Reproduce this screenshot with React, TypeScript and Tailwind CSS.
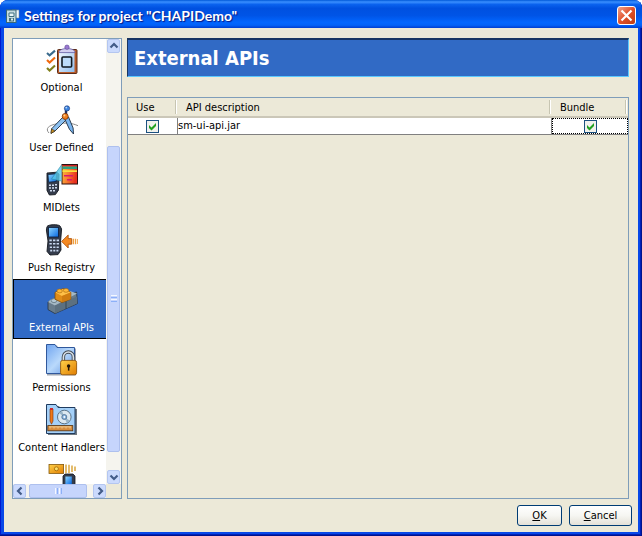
import React, { useState } from "react";
import type { ReactNode } from "react";

function Icon({ children }: { children: ReactNode }) {
  return (
    <svg viewBox="0 0 33 33" className="h-[33px] w-[33px]" aria-hidden="true">
      <defs>
        <linearGradient id="paper" x1="0" y1="0" x2="1" y2="1">
          <stop offset="0" stopColor="#f4faff" />
          <stop offset="1" stopColor="#8fbcec" />
        </linearGradient>
        <linearGradient id="folder" x1="0" y1="0" x2="1" y2="1">
          <stop offset="0" stopColor="#6fa4f0" />
          <stop offset="0.5" stopColor="#b9d9fb" />
          <stop offset="1" stopColor="#5a90e0" />
        </linearGradient>
        <linearGradient id="gold" x1="0" y1="0" x2="1" y2="1">
          <stop offset="0" stopColor="#ffd24a" />
          <stop offset="1" stopColor="#e07c00" />
        </linearGradient>
        <linearGradient id="screen" x1="0" y1="0" x2="1" y2="1">
          <stop offset="0" stopColor="#8fd8ff" />
          <stop offset="1" stopColor="#0868e0" />
        </linearGradient>
        <linearGradient id="heat" x1="0" y1="0" x2="1" y2="0.3">
          <stop offset="0" stopColor="#f8c840" />
          <stop offset="0.5" stopColor="#f88030" />
          <stop offset="1" stopColor="#e83020" />
        </linearGradient>
      </defs>
      {children}
    </svg>
  );
}

function OptionalIcon() {
  return (
    <Icon>
      <g fill="none" strokeWidth="2.1">
        <path d="M2 9l2.600 2.400L10 6.600" stroke="#3a6a8c" />
        <path d="M2 16l2.600 2.600L10 13.600" stroke="#f06a10" />
        <path d="M2 24l2.600 2.600L10 21.600" stroke="#80801c" />
      </g>
      <rect x="12.5" y="5.5" width="19.5" height="24" rx="1" fill="#b85a28" stroke="#5c2c18" />
      <path d="M14 7h15.500v21H14z" fill="url(#paper)" />
      <path d="M14 8.600c0-3 4-4 8-4s8 1 8 4z" fill="#d4d0f0" stroke="#6058a0" strokeWidth=".8" />
      <circle cx="22" cy="3.200" r="2.200" fill="#9a78d0" stroke="#5c4898" strokeWidth=".6" />
      <rect x="17" y="13" width="9.600" height="10" rx="1" fill="#bcdcfa" stroke="#101820" strokeWidth="1.600" />
    </Icon>
  );
}

function CompassIcon() {
  return (
    <Icon>
      <path d="M4 29c-4-4-1-8 9-9.300 8-1.200 14-.700 20 2" fill="none" stroke="#8c8c8c" strokeWidth="1" />
      <path d="M18.500 12.500l4 2L10 27l-4 2.400.600-4.600z" fill="#8cc0f0" stroke="#1c2c40" strokeWidth=".9" />
      <path d="M6.600 24.800L10 27l-4 2.400z" fill="#c89020" stroke="#302010" strokeWidth=".5" />
      <path d="M19.500 14.500l4-1.500 4.600 11 .400 6-4-4.600z" fill="#78b4f0" stroke="#1c2c40" strokeWidth=".9" />
      <path d="M21 6v6" stroke="#203060" strokeWidth="2.400" />
      <circle cx="22" cy="4.400" r="2.600" fill="#3d84e0" stroke="#1c3c7c" strokeWidth=".7" />
      <circle cx="21.300" cy="3.600" r=".9" fill="#b8dcff" />
      <circle cx="20.200" cy="12.400" r="3" fill="#f08020" stroke="#7c3000" strokeWidth=".8" />
      <circle cx="19.400" cy="11.500" r="1" fill="#ffd090" />
    </Icon>
  );
}

function MidletsIcon() {
  return (
    <Icon>
      <rect x="17" y="0.500" width="15.500" height="19.500" fill="url(#heat)" stroke="#301010" />
      <path d="M17.500 1h14.500v1.600H17.500z" fill="#d02020" />
      <path d="M17.500 2.600h14.500v2.400H17.500z" fill="#30a080" />
      <path d="M17.500 6.200h14.500v1.800H17.500z" fill="#f8e040" />
      <path d="M19 11h9v1.400h-9zM22 15h5v1.400h-5z" fill="#d81870" />
      <path d="M2 9l10-.800 2 2-.600 16-3 4.400-6 .400-2.400-4.600z" fill="#343c4c" stroke="#14181f" strokeWidth=".9" />
      <path d="M3 10.600l8.600-.800-.400 7.600-7.600.800z" fill="url(#screen)" stroke="#081838" strokeWidth=".7" />
      <path d="M6.500 15L16.500 1v16z" fill="#58c8e8" opacity=".8" />
      <path d="M6.500 15L16.500 1M6.500 15l10 2" fill="none" stroke="#2888a8" strokeWidth=".6" />
      <path
        d="M4 20.400h2v1.500H4zM7 20.400h2v1.500H7zM10 20h2v1.500h-2zM4 23.200h2v1.500H4zM7 23.200h2v1.500H7zM10 23h2v1.500h-2zM5 26h2v1.500H5zM8 26h2v1.500H8z"
        fill="#d0dcf0"
      />
    </Icon>
  );
}

function PushIcon() {
  return (
    <Icon>
      <path d="M2 2.600C3 .400 13 0 15 2l1.600 3-1 12 .400 9-3 4.600-8 .400-3-3.600L3 17 1.400 6z" fill="#343c4c" stroke="#14181f" strokeWidth=".9" />
      <rect x="3.600" y="3.400" width="9.800" height="9.600" fill="url(#screen)" stroke="#081838" strokeWidth=".8" />
      <path
        d="M4.400 15.400h2.400v1.800H4.400zM8 15.400h2.400v1.800H8zM11.600 15.400H14v1.800h-2.400zM4.400 19h2.400v1.600H4.400zM8 19h2.400v1.600H8zM11.600 19H14v1.600h-2.400zM4.800 22.400H7V24H4.800zM8.200 22.400h2.200V24H8.200zM11.600 22.400h2.200V24h-2.200zM5.200 25.800h2v1.600h-2zM8.300 25.800h2v1.600h-2zM11.400 25.800h2v1.600h-2z"
        fill="#c8d8f0"
      />
      <path d="M16.600 17.400l6.600-6.400v3.600h3.400v5.600h-3.400v3.800z" fill="#f48820" stroke="#a84c08" strokeWidth=".8" />
      <path d="M27.600 14.800h1.600v5.400h-1.600zM30 14.800h1.200v5.400H30zM32 15h.800v5H32z" fill="#f0a040" />
    </Icon>
  );
}

function BricksIcon() {
  return (
    <Icon>
      <path d="M3 18l7-4 21.600-6 .800 11.600L10 29.600l-7-4z" fill="#687c8c" stroke="#283440" strokeWidth=".8" />
      <path d="M3 18l7 3.600L32 9.400 25 7 5 16z" fill="#a4b8c4" />
      <path d="M10 21.600l22-9.200v7.200L10 29.400z" fill="#5c7080" />
      <path d="M21 17v8" stroke="#2c3c48" strokeWidth=".8" />
      <ellipse cx="9" cy="16.600" rx="2.800" ry="2" fill="#b4c8d4" stroke="#4c606c" strokeWidth=".6" />
      <path d="M10 8.400l8-3.800 7.800 3.800v6.800L17 18.600l-7-3.400z" fill="#e08c18" stroke="#844c08" strokeWidth=".8" />
      <path d="M10.400 8.600l7.600-3.600 7.600 3.600L17 12z" fill="#ffc048" />
      <path d="M17 12l8.600-3.400v6.600L17 18.200z" fill="#d07c10" />
      <ellipse cx="14.600" cy="7" rx="2.700" ry="1.900" fill="#ffb838" stroke="#a86408" strokeWidth=".6" />
      <ellipse cx="21" cy="6.400" rx="2.700" ry="1.900" fill="#ffb838" stroke="#a86408" strokeWidth=".6" />
    </Icon>
  );
}

function PermissionsIcon() {
  return (
    <Icon>
      <path d="M2 1.500h10l2 3h17v27H2z" fill="#a0a8b4" />
      <path d="M1.500.500H10l2 3h17.500v26h-28z" fill="url(#folder)" stroke="#30589c" />
      <path d="M18.400 17v-4a5 5 0 0110 0v4" fill="none" stroke="#404850" strokeWidth="3.400" />
      <path d="M18.400 17v-4a5 5 0 0110 0v4" fill="none" stroke="#d8e0e8" strokeWidth="1.600" />
      <rect x="15.600" y="16.400" width="16" height="14.400" rx="2" fill="url(#gold)" stroke="#94580c" strokeWidth=".9" />
      <circle cx="23.600" cy="22" r="1.700" fill="#241404" />
      <path d="M22.900 22h1.500v4.600h-1.500z" fill="#241404" />
    </Icon>
  );
}

function ContentIcon() {
  return (
    <Icon>
      <path d="M3 2h11l2 3h16v26H3z" fill="#707880" />
      <path d="M1.500.500H11l2 3h17v26H1.500z" fill="#a4d0f8" stroke="#203c60" />
      <path d="M5 5h3v12l-1.500 3.200L5 17z" fill="#f07818" stroke="#7c3008" strokeWidth=".6" />
      <path d="M5 4h3v2H5z" fill="#d02828" />
      <circle cx="19.300" cy="13" r="6.800" fill="#dce8f0" stroke="#50687c" strokeWidth=".9" />
      <path d="M19.300 13L14 9a6.600 6.600 0 013-2.300zM19.300 13l5.400 3.600a6.600 6.600 0 01-3 2.400z" fill="#98b4c8" />
      <circle cx="19.300" cy="13" r="2.500" fill="#88b4e0" stroke="#406080" strokeWidth=".7" />
      <circle cx="19.300" cy="13" r=".9" fill="#fff" />
      <rect x="2.800" y="21.600" width="25" height="5.200" fill="#d88c3c" stroke="#54300c" strokeWidth=".8" />
      <path d="M5 22v2.400M7 22v1.600M9 22v2.400M11 22v1.600M13 22v2.400M15 22v1.600M17 22v2.400M19 22v1.600M21 22v2.400M23 22v1.600M25 22v2.400" stroke="#fff0c0" strokeWidth=".8" />
    </Icon>
  );
}

function SignedIcon() {
  return (
    <Icon>
      <rect x="4" y=".4" width="14.600" height="9" fill="url(#gold)" stroke="#84580c" strokeWidth=".8" />
      <circle cx="11.400" cy="4.800" r="2" fill="#ffe068" stroke="#9c6408" strokeWidth=".8" />
      <path d="M21 .600v8.600M24 .800v8.200M27 1.600v6.400M30 2.600v4.400" stroke="#d8a030" strokeWidth="1.400" />
      <path d="M18 12l2-2h8l2 2v20H18z" fill="#343c4c" stroke="#14181f" strokeWidth=".8" />
      <path d="M20.400 12.500h6.400v7.500h-6.400z" fill="url(#screen)" />
    </Icon>
  );
}

const categories = [
  { name: "Optional", icon: <OptionalIcon /> },
  { name: "User Defined", icon: <CompassIcon /> },
  { name: "MIDlets", icon: <MidletsIcon /> },
  { name: "Push Registry", icon: <PushIcon /> },
  { name: "External APIs", icon: <BricksIcon /> },
  { name: "Permissions", icon: <PermissionsIcon /> },
  { name: "Content Handlers", icon: <ContentIcon /> },
  { name: "", icon: <SignedIcon /> },
];

const chevrons = {
  up: "M2.500 7.500L6 4l3.500 3.500",
  down: "M2.500 4.500L6 8l3.500-3.500",
  left: "M7.500 2.500L4 6l3.500 3.500",
  right: "M4.500 2.500L8 6 4.500 9.500",
};

function ScrollButton({ direction }: { direction: keyof typeof chevrons }) {
  return (
    <button
      type="button"
      aria-label={"Scroll " + direction}
      className="flex h-[14px] w-[13px] shrink-0 items-center justify-center rounded-xs border border-[#b4c6f0] bg-[#cbdafd]"
    >
      <svg viewBox="0 0 12 12" className="h-3 w-3 shrink-0" aria-hidden="true">
        <path d={chevrons[direction]} fill="none" stroke="#435c88" strokeWidth="2.200" />
      </svg>
    </button>
  );
}

function Check({ label }: { label: string }) {
  const [on, setOn] = useState(true);
  return (
    <span className="mx-auto grid h-[13px] w-[13px]">
      <input
        type="checkbox"
        aria-label={label}
        checked={on}
        onChange={(e) => setOn(e.target.checked)}
        className="col-start-1 row-start-1 h-[13px] w-[13px] appearance-none border border-[#1c5180] bg-[#f1f1ed]"
      />
      {on && (
        <svg viewBox="0 0 13 13" className="pointer-events-none col-start-1 row-start-1 h-[13px] w-[13px]" aria-hidden="true">
          <path d="M3 5l2.500 2.500L10 3v3l-4.500 4.500L3 8z" fill="#21a121" />
        </svg>
      )}
    </span>
  );
}

function HeaderCell({ children }: { children: ReactNode }) {
  return (
    <th scope="col" className="border-b-2 border-[#cbc7b8] p-0 text-left font-normal">
      <div className="flex h-[18px] items-center">
        <span className="flex-1 pt-[2px] pl-2 leading-4">{children}</span>
        <span className="mr-px h-[14px] w-[2px] border-r border-l border-r-white border-l-[#c7c5b2]" />
      </div>
    </th>
  );
}

const dialogButton =
  "h-[21px] rounded-[3px] border border-[#003c74] bg-linear-to-b from-white via-[#f6f6f2] to-[#e4e1d8] text-center leading-[18px]";

export default function App() {
  const [selected, setSelected] = useState("External APIs");
  return (
    <div className="flex h-screen flex-col overflow-hidden rounded-t-lg bg-[#0848e8] font-['DejaVu_Sans_Condensed','Liberation_Sans',sans-serif] text-[11px] text-black shadow-[inset_-1px_-1px_0_#00138c,inset_-2px_-2px_0_#0020b8,inset_1px_0_0_#0019cf]">
      <header className="flex h-7 shrink-0 items-center gap-1 bg-[linear-gradient(to_bottom,#0058d8_0%,#3a8fff_7%,#0a62ee_16%,#0050e0_30%,#0054e6_55%,#0266ff_80%,#0262f8_90%,#003dd0_100%)] pt-[3px] pr-[6px] pl-[6px]">
        <svg viewBox="0 0 14 14" className="h-[14px] w-[14px]" aria-hidden="true">
          <path d="M6 1h7v8H6z" fill="#f4fafc" stroke="#7898a0" strokeWidth=".6" />
          <rect x=".5" y="1" width="9.500" height="12.500" fill="#c4dce0" stroke="#386878" />
          <path d="M3 4h5v3.500H3z" fill="#e8f8f8" stroke="#407080" />
          <path d="M3 9h5v3.500H3z" fill="#44707c" />
          <path d="M5 9.500h2v2H5z" fill="#d8f0f0" />
        </svg>
        <h1 className="flex-1 font-['Lato','Open_Sans',sans-serif] text-sm leading-5 font-bold text-white [text-shadow:1px_1px_1px_#0a1883]">
          Settings for project "CHAPIDemo"
        </h1>
        <button
          type="button"
          aria-label="Close"
          className="flex h-[19px] w-[19px] items-center justify-center rounded-[3px] border border-white bg-linear-to-br from-[#f0a088] via-[#e05028] to-[#c03c10]"
        >
          <svg viewBox="0 0 13 13" className="h-[13px] w-[13px]" aria-hidden="true">
            <path d="M1.500 1.500l10 10M11.500 1.500l-10 10" stroke="#fff" strokeWidth="2.200" />
          </svg>
        </button>
      </header>

      <main className="mx-1 mb-1 flex min-h-0 flex-1 flex-col gap-[6px] bg-[#ece9d8] pt-[10px] pr-[6px] pb-[6px] pl-2">
        <div className="flex min-h-0 flex-1 gap-[5px] pr-[3px]">
          <nav
            aria-label="Categories"
            className="grid w-[110px] shrink-0 grid-cols-[minmax(0,1fr)_15px] grid-rows-[minmax(0,1fr)_14px] border border-[#7f9db9] bg-white"
          >
            <ul className="overflow-hidden">
              {categories.map(({ name, icon }) => (
                <li key={name}>
                  <button
                    type="button"
                    aria-label={name || "More"}
                    aria-pressed={name === selected}
                    onClick={() => setSelected(name)}
                    className={
                      "flex h-[60px] w-[97px] flex-col items-center gap-1 border pt-1 leading-[14px] whitespace-nowrap " +
                      (name === selected ? "border-black bg-[#316ac5] text-white" : "border-transparent")
                    }
                  >
                    {icon}
                    <span>{name}</span>
                  </button>
                </li>
              ))}
            </ul>
            <div className="flex min-h-0 flex-col items-center bg-[#f5f4ee]">
              <ScrollButton direction="up" />
              <div className="flex-93" />
              <div className="flex w-[13px] flex-305 flex-col items-center justify-center gap-px rounded-xs border border-[#aec0ee] bg-[#c6d5fc]">
                <i className="h-px w-[6px] bg-[#f4f8ff]" />
                <i className="h-px w-[6px] bg-[#8cb0f8]" />
                <i className="h-px w-[6px] bg-[#f4f8ff]" />
                <i className="h-px w-[6px] bg-[#8cb0f8]" />
              </div>
              <div className="flex-18" />
              <ScrollButton direction="down" />
            </div>
            <div className="flex bg-[#f5f4ee]">
              <ScrollButton direction="left" />
              <div className="w-[3px]" />
              <div className="flex w-[58px] items-center justify-center gap-px rounded-xs border border-[#aec0ee] bg-[#c6d5fc]">
                <i className="h-[6px] w-px bg-[#f4f8ff]" />
                <i className="h-[6px] w-px bg-[#8cb0f8]" />
                <i className="h-[6px] w-px bg-[#f4f8ff]" />
                <i className="h-[6px] w-px bg-[#8cb0f8]" />
              </div>
              <div className="flex-1" />
              <ScrollButton direction="right" />
            </div>
            <div className="bg-[#ece9d8]" />
          </nav>

          <section className="flex min-w-0 flex-1 flex-col gap-5">
            <h2 className="flex h-[39px] shrink-0 items-center border border-t-2 border-t-[#183562] border-r-[#5bc8ff] border-b-[#5bc8ff] border-l-[#183562] bg-[#316ac5] pl-[6px] text-xl font-bold text-white">
              External APIs
            </h2>
            <div className="min-h-0 flex-1 border border-[#7f9db9]">
              <table className="w-full table-fixed border-separate border-spacing-0">
                <colgroup>
                  <col className="w-[50px]" />
                  <col />
                  <col className="w-[76px]" />
                </colgroup>
                <thead>
                  <tr>
                    <HeaderCell>Use</HeaderCell>
                    <HeaderCell>API description</HeaderCell>
                    <HeaderCell>Bundle</HeaderCell>
                  </tr>
                </thead>
                <tbody>
                  <tr className="bg-white">
                    <td className="border-r border-b border-[#808080] p-0">
                      <Check label="Use sm-ui-api.jar" />
                    </td>
                    <td className="border-r border-b border-[#808080] p-0 leading-4">sm-ui-api.jar</td>
                    <td className="border-b border-[#808080] p-0">
                      <div className="flex h-4 items-center border border-dotted border-black">
                        <Check label="Bundle sm-ui-api.jar" />
                      </div>
                    </td>
                  </tr>
                </tbody>
              </table>
            </div>
          </section>
        </div>

        <footer className="flex shrink-0 justify-end gap-[7px]">
          <button type="button" className={dialogButton + " w-[45px]"}>
            <u>O</u>K
          </button>
          <button type="button" className={dialogButton + " w-[63px]"}>
            <u>C</u>ancel
          </button>
        </footer>
      </main>
    </div>
  );
}
